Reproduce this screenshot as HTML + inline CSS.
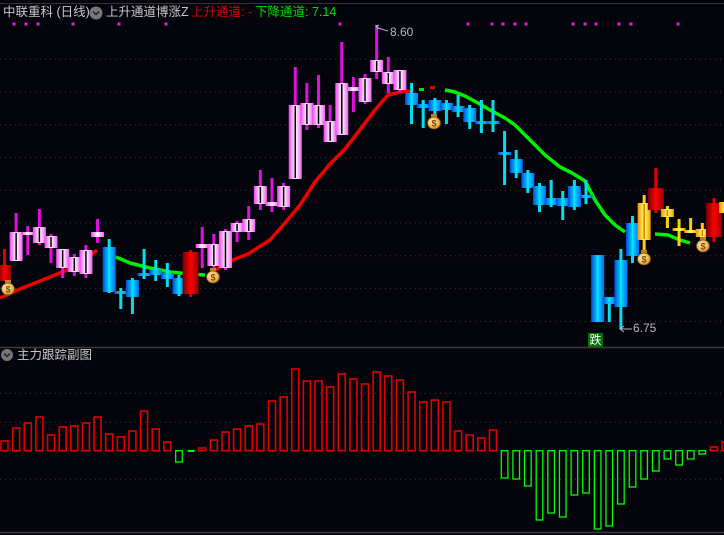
<!DOCTYPE html>
<html><head><meta charset="utf-8">
<style>
html,body{margin:0;padding:0;background:#04040c;width:724px;height:535px;overflow:hidden}
#w{position:relative;width:724px;height:535px;font-family:"Liberation Sans","Noto Sans CJK SC",sans-serif}
.t{position:absolute;font-size:12.5px;white-space:nowrap;line-height:14px}
svg{position:absolute;left:0;top:0}
</style></head><body><div id="w">
<svg id="s" width="724" height="535" viewBox="0 0 724 535">
<defs>
<linearGradient id="gp" x1="0" x2="1"><stop offset="0" stop-color="#f040f0"/><stop offset="0.5" stop-color="#ffffff"/><stop offset="1" stop-color="#f060f0"/></linearGradient>
<linearGradient id="gb" x1="0" x2="1"><stop offset="0" stop-color="#0048e0"/><stop offset="0.5" stop-color="#00d8ff"/><stop offset="1" stop-color="#0070f0"/></linearGradient>
<linearGradient id="gr" x1="0" x2="1"><stop offset="0" stop-color="#700000"/><stop offset="0.5" stop-color="#ff0000"/><stop offset="1" stop-color="#900000"/></linearGradient>
<linearGradient id="gy" x1="0" x2="1"><stop offset="0" stop-color="#f09000"/><stop offset="0.5" stop-color="#ffff70"/><stop offset="1" stop-color="#f0a000"/></linearGradient>
<radialGradient id="gm" cx="0.4" cy="0.4" r="0.7"><stop offset="0" stop-color="#fff0c0"/><stop offset="0.7" stop-color="#e8b040"/><stop offset="1" stop-color="#a06010"/></radialGradient>
</defs>
<g id="grid"></g>
<g id="sub"></g>
<g id="lines"></g>
<g id="c"></g>
<g id="bags"></g>
<circle cx="96" cy="13" r="6.5" fill="#777"/>
<polyline points="93,11.5 96,14.5 99,11.5" fill="none" stroke="#222" stroke-width="1.5"/>
<circle cx="7" cy="355" r="6" fill="#777"/>
<polyline points="4,353.5 7,356.5 10,353.5" fill="none" stroke="#222" stroke-width="1.5"/>
</svg>
<div class="t" style="left:3px;top:5px;color:#c8c8c8">中联重科 (日线)</div>
<div class="t" style="left:106px;top:5px;color:#c8c8c8">上升通道博涨Z</div>
<div class="t" style="left:191px;top:5px;color:#e00000">上升通道: -</div>
<div class="t" style="left:255px;top:5px;color:#00e000">下降通道: 7.14</div>
<div class="t" style="left:390px;top:25px;color:#b8b8b8;font-size:12px">8.60</div>
<div class="t" style="left:633px;top:321px;color:#b8b8b8;font-size:12px">6.75</div>
<div style="position:absolute;left:588px;top:333px;width:15px;height:14px;background:#007000;color:#fff;font-size:12px;line-height:14px;text-align:center;font-family:'Noto Sans CJK SC',sans-serif">跌</div>
<div class="t" style="left:17px;top:348px;color:#c8c8c8">主力跟踪副图</div>
</div>
<script>
var NS="http://www.w3.org/2000/svg";
function el(p,t,a){var e=document.createElementNS(NS,t);for(var k in a)e.setAttribute(k,a[k]);document.getElementById(p).appendChild(e);return e;}
el("grid","line",{x1:0,x2:724,y1:3.5,y2:3.5,stroke:"#333","stroke-width":1});
el("grid","line",{x1:0,x2:724,y1:347.5,y2:347.5,stroke:"#3a3a3a","stroke-width":1.5});
el("grid","line",{x1:0,x2:724,y1:532.5,y2:532.5,stroke:"#3a3a3a","stroke-width":1.5});
[59.3,92,124.7,157.5,190.3,223,255.8,288.6,321.4,393.3,422.3,450.7,479.3].forEach(function(y){
 el("grid","line",{x1:0,x2:724,y1:y,y2:y,stroke:"#3c3c3c","stroke-width":1,"stroke-dasharray":"1,4"});});
[14,26,38,73,119,166,340,468,492,503,515,526,573,585,596,619,631,678].forEach(function(x){el("grid","rect",{x:x-1.5,y:22.5,width:3,height:3,fill:"#e020e0"});});
function cx(i){return 4.5+11.63*i;}
var sub=[441,428,423,417,435,427,426,423,417,434,437,431,411,429,442,-462,-452,448,440,432,429,426,424,401,397,369,381,381,387,374,379,384,372,376,380,392,402,400,402,431,435,438,430,-478,-479,-486,-520,-513,-517,-495,-493,-529,-526,-504,-487,-479,-471,-459,-465,-459,-454,447,442];
var Z=450.7;
sub.forEach(function(v,i){var x=cx(i);
 if(v>0){el("sub","rect",{x:x-3.5,y:v,width:7,height:Z-v,fill:"none",stroke:"#e00000","stroke-width":1.6});}
 else{v=-v;if(i==16){el("sub","rect",{x:x-3,y:450,width:7,height:2,fill:"#00ff00"});return;}
 el("sub","rect",{x:x-3.3,y:Z,width:6.6,height:v-Z,fill:"none",stroke:"#00ff00","stroke-width":1.3});}
});
function pl(pts,col){el("lines","polyline",{points:pts.map(function(p){return p.join(",")}).join(" "),fill:"none",stroke:col,"stroke-width":3.5,"stroke-linejoin":"round"});}
pl([[0,298],[20,289],[40,281],[60,273],[80,264],[97,250]],"#f00000");
pl([[116,257],[130,263],[150,268],[170,272],[190,274],[205,275]],"#00f000");
pl([[213,271],[235,259],[248,254],[270,240],[285,223],[300,205],[315,182],[330,164],[345,149],[362,127],[375,110],[388,95],[400,92],[410,91]],"#f00000");
el("lines","rect",{x:419,y:88,width:5,height:3,fill:"#00e000"});
el("lines","rect",{x:430,y:86,width:5,height:3,fill:"#e00000"});
pl([[445,90],[455,92],[465,96],[478,103],[490,110],[505,118],[515,125],[530,140],[545,155],[560,167],[572,173],[585,181],[595,200],[605,215],[615,225],[625,232]],"#00f000");
pl([[655,234],[668,235],[680,240],[690,243]],"#00f000");
var C=[["r",265,281,249,281],["p",232,261,213,261],["p",232,235,226,255],["p",227,243,209,245],["p",236,248,234,263],["p",249,268,249,278],["p",257,272,254,276],["p",250,274,245,278],["p",232,237,219,243],["b",247,292,239,293],["b",291,294,288,309],["b",280,297,278,314],["b",273,276,249,279],["b",270,275,260,281],["b",273,279,263,287],["b",278,294,275,296],["r",252,294,250,297],["p",244,248,227,268],["p",244,266,234,271],["p",231,268,229,270],["p",223,232,221,242],["p",219,232,206,240],["p",186,204,170,210],["p",202,206,178,212],["p",186,207,183,210],["p",105,179,67,179],["p",103,125,83,130],["p",105,125,75,128],["p",121,142,105,142],["p",83,135,42,135],["p",87,91,77,112],["p",78,102,74,104],["p",60,72,25,79],["p",72,84,57,93],["p",70,90,70,92],["b",93,105,83,124],["b",104,108,100,128],["b",100,111,98,124],["b",103,110,100,124],["b",106,112,95,117],["b",108,122,105,129],["b",121,124,100,133],["b",121,124,100,132],["b",152,155,131,185],["b",159,173,150,178],["b",173,188,170,193],["b",186,205,183,212],["b",198,205,180,207],["b",198,206,191,220],["b",186,207,180,210],["b",195,198,180,204],["b",255,322,255,322],["b",297,304,297,322],["b",260,307,249,329],["b",223,256,216,263],["y",203,240,195,251],["r",188,210,168,213],["y",209,217,206,228],["y",228,231,219,246],["y",230,233,218,233],["y",229,237,223,240],["r",203,237,198,242],["y",202,213,198,216]];
var wk={p:"#e010e0",b:"#00e0f0",r:"#e00000",y:"#ffd000"};
var inner={p:"#000",b:"#00e8ff",r:null,y:"#d08000"};
var gr={p:"url(#gp)",b:"url(#gb)",r:"url(#gr)",y:"url(#gy)"};
C.forEach(function(c,i){var x=cx(i);var t=c[0];var w=(t=="r"&&(i==16||i==56||i==61))?16:13;
 el("c","rect",{x:x-1.5,y:c[3],width:3,height:c[4]-c[3],fill:wk[t]});
 var h=Math.max(c[2]-c[1],3);
 el("c","rect",{x:x-w/2,y:c[1],width:w,height:h,fill:gr[t]});
 if(inner[t]&&h>5)el("c","rect",{x:x-0.75,y:c[1]+1,width:1.5,height:h-2,fill:inner[t]});
});
el("c","polyline",{points:"388,31 378,28 376,26",fill:"none",stroke:"#b8b8b8","stroke-width":1});
el("c","polyline",{points:"379,25 376,26 378,29",fill:"none",stroke:"#b8b8b8","stroke-width":1});
el("c","line",{x1:620,y1:329,x2:632,y2:329,stroke:"#b8b8b8","stroke-width":1});
el("c","polyline",{points:"624,326 620,329 624,332",fill:"none",stroke:"#b8b8b8","stroke-width":1});
[[8,289],[213,277],[434,123],[644,259],[703,246]].forEach(function(p){
 el("bags","rect",{x:p[0]-3,y:p[1]-9,width:6,height:3,fill:"#c08020"});
 el("bags","ellipse",{cx:p[0],cy:p[1],rx:6.5,ry:6,fill:"url(#gm)",stroke:"#805010","stroke-width":0.8});
 var t=el("bags","text",{x:p[0],y:p[1]+3.5,"font-size":9,"font-weight":"bold","text-anchor":"middle",fill:"#804000","font-family":"Liberation Sans,sans-serif"});t.textContent="$";
});
</script>
</body></html>
